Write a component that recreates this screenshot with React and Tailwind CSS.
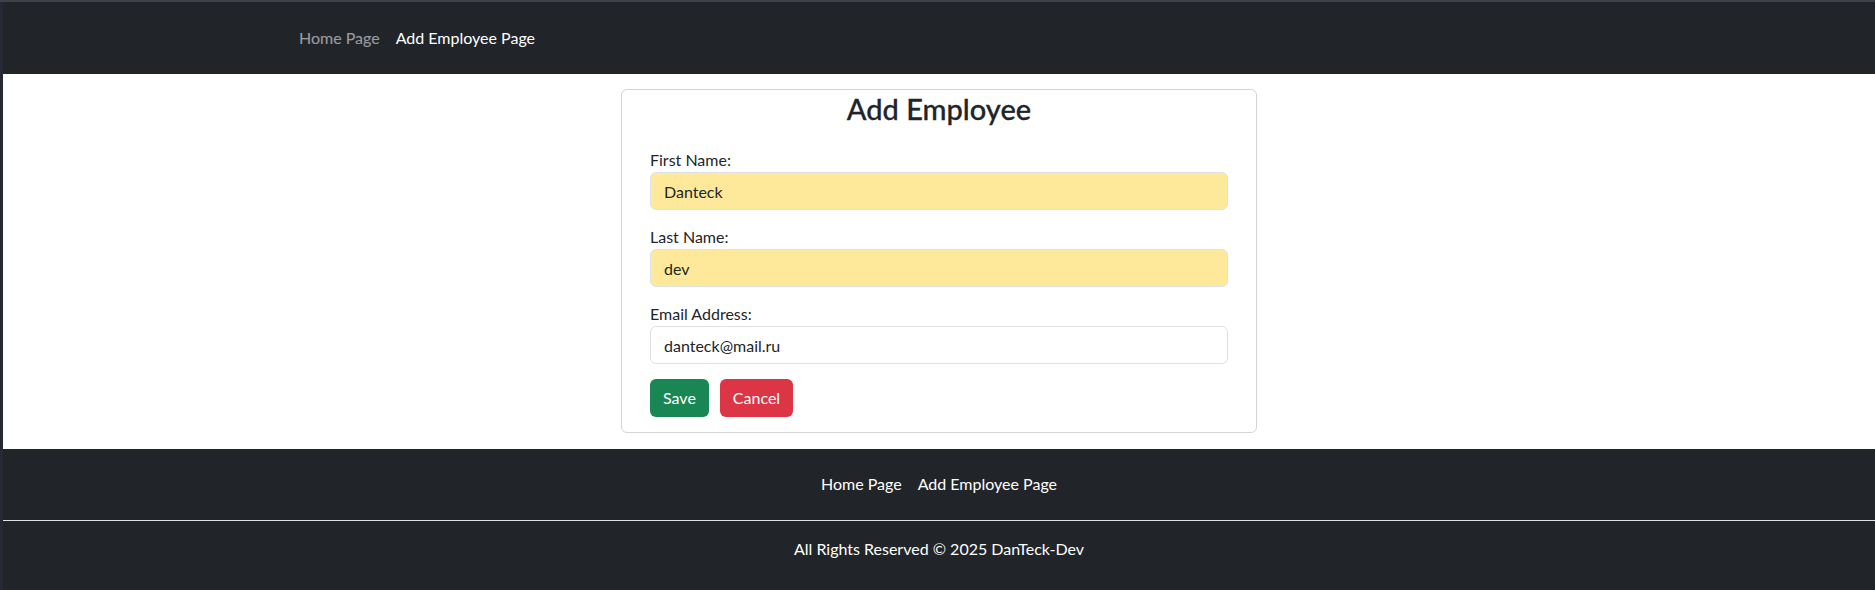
import React from "react";

const font = { fontFamily: "Lato, 'Noto Sans', sans-serif" };

function Field({ label, value, filled }) {
  return (
    <div className="mb-[15px]">
      <label className="block leading-6 text-[16px] text-[#212529]">{label}</label>
      <input
        readOnly
        value={value}
        className={
          "block w-full h-[38px] px-[13px] rounded-md border border-[#dee2e6] text-[16px] text-[#212529] outline-none " +
          (filled ? "bg-[#fee99a]" : "bg-white")
        }
      />
    </div>
  );
}

export default function App() {
  return (
    <div className="min-h-screen flex flex-col bg-[#262833]" style={font}>
      <div className="h-[2px] bg-[#3f4049]" />
      <div className="flex flex-1">
        <div className="w-[3px] shrink-0 bg-[#262833]" />
        <div className="flex-1 flex flex-col">
          {/* navbar */}
          <nav className="bg-[#212529] h-[72px] flex items-center">
            <div className="w-[1320px] mx-auto px-3 flex text-[16px] leading-6">
              <a className="px-2 text-white/55">Home Page</a>
              <a className="px-2 text-white">Add Employee Page</a>
            </div>
          </nav>

          {/* content */}
          <main className="bg-white pt-[15px] pb-4">
            <div className="w-[636px] mx-auto border border-[#d4d4d4] rounded-md bg-white">
              <h2 className="text-center text-[29px] leading-[38px] font-medium text-[#212529] [-webkit-text-stroke:0.3px_#212529]">
                Add Employee
              </h2>
              <form className="px-7 pt-5 pb-[15px]">
                <Field label="First Name:" value="Danteck" filled />
                <Field label="Last Name:" value="dev" filled />
                <Field label="Email Address:" value="danteck@mail.ru" />
                <div className="flex gap-[11px]">
                  <button type="button" className="h-[38px] px-[13px] rounded-md bg-[#198754] text-white text-[16px]">
                    Save
                  </button>
                  <button type="button" className="h-[38px] px-[13px] rounded-md bg-[#dc3545] text-white text-[16px]">
                    Cancel
                  </button>
                </div>
              </form>
            </div>
          </main>

          {/* footer */}
          <footer className="bg-[#212529] pt-[23px] pb-[29px] text-white text-[16px] leading-6">
            <div className="flex justify-center">
              <a className="px-2">Home Page</a>
              <a className="px-2">Add Employee Page</a>
            </div>
            <div className="mt-6 border-t border-[#dee2e6]" />
            <p className="mt-4 text-center">All Rights Reserved © 2025 DanTeck-Dev</p>
          </footer>
        </div>
      </div>
    </div>
  );
}
